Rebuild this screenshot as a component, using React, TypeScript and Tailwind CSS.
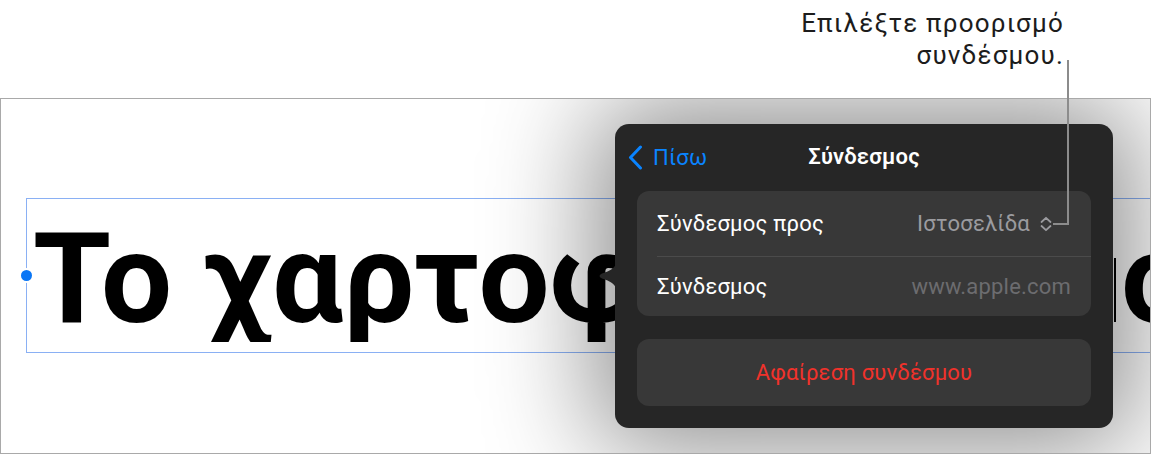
import React from 'react';

const font = { fontFamily: 'Roboto, "Liberation Sans", sans-serif' };

function BackChevron() {
  return (
    <svg width="15" height="25" viewBox="0 0 15 25" fill="none">
      <path d="M12.5 2 L2.5 12.5 L12.5 23" stroke="#0a84ff" strokeWidth="3" strokeLinecap="round" strokeLinejoin="round" />
    </svg>
  );
}

function UpDown() {
  return (
    <svg width="14" height="16" viewBox="0 0 14 16" fill="none">
      <path d="M2.5 6 L7 1.8 L11.5 6" stroke="#9b9b9f" strokeWidth="1.8" strokeLinecap="round" strokeLinejoin="round" />
      <path d="M2.5 10 L7 14.2 L11.5 10" stroke="#9b9b9f" strokeWidth="1.8" strokeLinecap="round" strokeLinejoin="round" />
    </svg>
  );
}

function Popover() {
  return (
    <div className="absolute left-[614px] top-[25px] w-[498px] h-[304px] rounded-[14px] bg-[#262626] shadow-[0_0_110px_20px_rgba(0,0,0,0.45)] text-[22px] tracking-[0.2px]">
      {/* arrow pointing at the text */}
      <svg className="absolute left-[-18px] top-[138px]" width="19" height="28" viewBox="0 0 19 28">
        <path d="M19 0 C19 6 13 9 5 11.5 Q0 14 5 16.5 C13 19 19 22 19 28 Z" fill="#262626" />
      </svg>

      {/* header */}
      <div className="relative h-[67px] flex items-center justify-center">
        <div className="absolute left-[13px] top-[21px] flex items-center gap-[10px]">
          <BackChevron />
          <span className="text-[#0a84ff] leading-none">Πίσω</span>
        </div>
        <span className="font-semibold text-white leading-none mb-[1px]">Σύνδεσμος</span>
      </div>

      {/* link group */}
      <div className="mx-[22px] rounded-[12px] bg-[#383838] overflow-hidden">
        <div className="h-[65px] pl-[20px] pr-[22px] flex items-center justify-between">
          <span className="text-white">Σύνδεσμος προς</span>
          <div className="flex items-center gap-[9px] mr-[16px]">
            <span className="text-[#9b9b9f]">Ιστοσελίδα</span>
            <UpDown />
          </div>
        </div>
        <div className="ml-[20px] h-[1px] bg-[#4b4b4b]" />
        <div className="h-[59px] pl-[20px] pr-[20px] flex items-center justify-between">
          <span className="text-white">Σύνδεσμος</span>
          <span className="text-[#6c6c6f]">www.apple.com</span>
        </div>
      </div>

      {/* remove */}
      <div className="mx-[22px] mt-[23px] h-[67px] rounded-[12px] bg-[#383838] flex items-center justify-center">
        <span className="text-[#f0322b]">Αφαίρεση συνδέσμου</span>
      </div>
    </div>
  );
}

export default function App() {
  return (
    <div className="relative w-[1154px] h-[455px] bg-white overflow-hidden" style={font}>
      {/* callout */}
      <div className="h-[98px] pt-[7px] pr-[90px] text-right text-[26px] leading-[32px] tracking-[1.2px] text-[#1c1c1c]">
        <div>Επιλέξτε προορισμό</div>
        <div>συνδέσμου.</div>
      </div>

      {/* slide */}
      <div className="relative w-[1151px] h-[356px] border border-[#a9a9a9] overflow-hidden">
        <div className="relative ml-[25px] mt-[99px] w-[1200px] h-[155px] border border-[#8ab0f4]">
          <div className="absolute left-[-6px] top-[71px] w-[11px] h-[11px] rounded-full bg-[#0a76f5] ring-2 ring-white" />
          <div className="flex items-end h-full pb-[10px] pl-[6px] text-[126px] font-bold text-black leading-none tracking-[0.5px]">
            <span className="w-[1081px] overflow-hidden whitespace-nowrap">Το χαρτοφυλάκιο</span>
            <span className="w-[2px] h-[64px] bg-black mb-[20px]" />
            <span className="ml-[5px]">ο</span>
          </div>
        </div>
        <Popover />
      </div>

      {/* leader line */}
      <div className="absolute left-[1067px] top-[60px] w-[2px] h-[165px] bg-[#8c8c8c]" />
      <div className="absolute left-[1053px] top-[223px] w-[16px] h-[2px] bg-[#8c8c8c]" />
    </div>
  );
}
